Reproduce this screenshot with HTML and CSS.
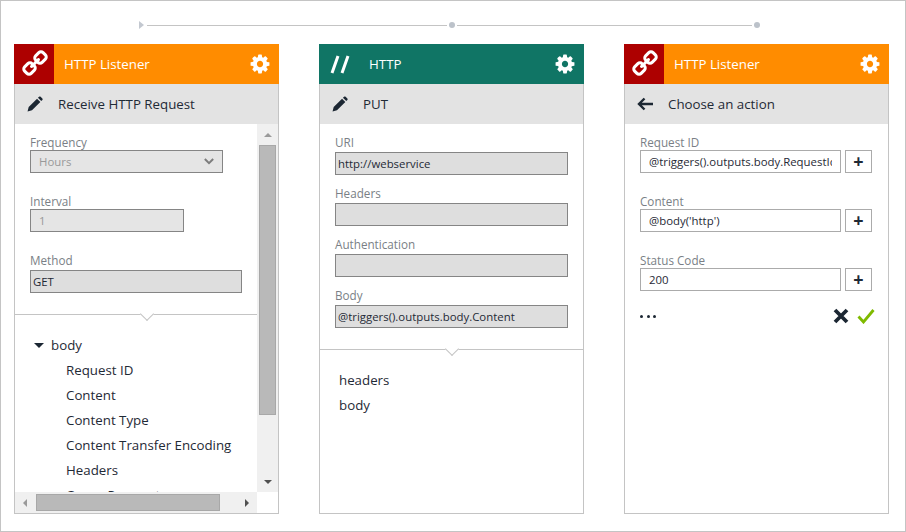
FILE: index.html
```html
<html>
  <head>
    <title>Logic app designer</title>
    <link rel="stylesheet" href="styles.css">
  </head>
  <body>
    <svg class="defs" width="0" height="0">
      <symbol id="iconLink" viewBox="0 0 1792 1792">
        <path fill="#fff" transform="matrix(-1 0 0 1 1792 0)" d="M1456 1216q0-40-28-68l-208-208q-28-28-68-28-42 0-72 32 3 3 19 18.500t21.500 21.500 15 19 13 25.500 3.500 27.500q0 40-28 68t-68 28q-15 0-27.500-3.500t-25.500-13-19-15-21.500-21.500-18.500-19q-33 31-33 73 0 40 28 68l206 207q27 27 68 27 40 0 68-26l147-146q28-28 28-67zm-703-705q0-40-28-68l-206-207q-28-28-68-28-39 0-68 27l-147 146q-28 28-28 67 0 40 28 68l208 208q27 27 68 27 42 0 72-31-3-3-19-18.500t-21.500-21.500-15-19-13-25.500-3.500-27.500q0-40 28-68t68-28q15 0 27.500 3.500t25.500 13 19 15 21.500 21.500 18.500 19q33-31 33-73zm895 705q0 120-85 203l-147 146q-83 83-203 83-121 0-204-85l-206-207q-83-83-83-203 0-123 88-209l-88-88q-86 88-208 88-120 0-204-84l-208-208q-84-84-84-204t85-203l147-146q83-83 203-83 121 0 204 85l206 207q83 83 83 203 0 123-88 209l88 88q86-88 208-88 120 0 204 84l208 208q84 84 84 204z"/>
      </symbol>
      <symbol id="iconGear" viewBox="0 0 1792 1792">
        <path fill="#fff" d="M1152 896q0-106-75-181t-181-75-181 75-75 181 75 181 181 75 181-75 75-181zm512-109v222q0 12-8 23t-20 13l-185 28q-19 54-39 91 35 50 107 138 10 12 10 25t-9 23q-27 37-99 108t-94 71q-12 0-26-9l-138-108q-44 23-91 38-16 136-29 186-7 28-36 28h-222q-14 0-24.500-8.500t-11.500-21.500l-28-184q-49-16-90-37l-141 107q-10 9-25 9-14 0-25-11-126-114-165-168-7-10-7-23 0-12 8-23 15-21 51-66.500t54-70.500q-27-50-41-99l-183-27q-13-2-21-12.500t-8-23.500v-222q0-12 8-23t19-13l186-28q14-46 39-92-40-57-107-138-10-12-10-24 0-10 9-23 26-36 98.500-107.500t94.500-71.500q13 0 26 10l138 107q44-23 91-38 16-136 29-186 7-28 36-28h222q14 0 24.500 8.500t11.500 21.500l28 184q49 16 90 37l142-107q9-9 24-9 13 0 25 10 129 119 165 170 7 8 7 22 0 12-8 23-15 21-51 66.500t-54 70.500q26 50 41 98l183 28q13 2 21 12.500t8 23.500z"/>
      </symbol>
      <symbol id="iconPencil" viewBox="0 0 18 18">
        <path fill="#1c2733" d="M0.6 17.400l1.300-5 9.400-9.400 3.700 3.700-9.400 9.400zM12.300 2l1.300-1.200c.5-.5 1.200-.5 1.700 0l2 2c.5.5.5 1.200 0 1.700l-1.300 1.200z"/>
      </symbol>
    </svg>

    <div class="frame">
      <div class="timeline">
        <span class="tlStart"></span>
        <span class="tlLine"></span>
        <span class="tlDot"></span>
        <span class="tlLine tlLineB"></span>
        <span class="tlDot"></span>
      </div>

      <div class="cards">
        <!-- primera tarjeta -->
        <div class="card">
          <div class="cardHead orange">
            <div class="headIcon red"><svg width="28" height="28"><use href="#iconLink"/></svg></div>
            <div class="headTitle">HTTP Listener</div>
            <svg class="gear" width="22" height="22"><use href="#iconGear"/></svg>
          </div>
          <div class="cardBody">
            <div class="subHead">
              <svg class="subIcon" width="16" height="16"><use href="#iconPencil"/></svg>
              <span>Receive HTTP Request</span>
            </div>
            <div class="scrollArea">
              <div class="scrollMain">
                <div class="pane">
                  <div class="form">
                    <div class="field">
                      <div class="lbl">Frequency</div>
                      <div class="box off selectBox">
                        <span>Hours</span>
                        <svg width="10" height="7" viewBox="0 0 12 8"><path d="M1 1l5 5 5-5" fill="none" stroke="#7d7d7d" stroke-width="2.400"/></svg>
                      </div>
                    </div>
                    <div class="field">
                      <div class="lbl">Interval</div>
                      <div class="box off intervalBox">1</div>
                    </div>
                    <div class="field">
                      <div class="lbl lblTall">Method</div>
                      <div class="box grey methodBox">GET</div>
                    </div>
                  </div>
                  <div class="divider dividerA"></div>
                  <div class="tree">
                    <div class="treeRoot"><span class="treeArrow"></span>body</div>
                    <div class="treeItem">Request ID</div>
                    <div class="treeItem">Content</div>
                    <div class="treeItem">Content Type</div>
                    <div class="treeItem">Content Transfer Encoding</div>
                    <div class="treeItem">Headers</div>
                    <div class="treeItem">Query Parameters</div>
                  </div>
                </div>
                <div class="vScroll">
                  <span class="arrow arrowUp"></span>
                  <span class="vThumb"></span>
                  <span class="arrow arrowDown"></span>
                </div>
              </div>
              <div class="hRow">
                <div class="hScroll">
                  <span class="arrow arrowLeft"></span>
                  <span class="hThumb"></span>
                  <span class="arrow arrowRight"></span>
                </div>
              </div>
            </div>
          </div>
        </div>

        <!-- segunda tarjeta -->
        <div class="card">
          <div class="cardHead teal">
            <div class="headIcon">
              <svg width="24" height="24" viewBox="0 0 24 24"><path d="M11 4L5 21M21 4L15 21" fill="none" stroke="#fff" stroke-width="3"/></svg>
            </div>
            <div class="headTitle">HTTP</div>
            <svg class="gear" width="22" height="22"><use href="#iconGear"/></svg>
          </div>
          <div class="cardBody">
            <div class="subHead">
              <svg class="subIcon" width="16" height="16"><use href="#iconPencil"/></svg>
              <span>PUT</span>
            </div>
            <div class="form formTight">
              <div class="field">
                <div class="lbl lblTall">URI</div>
                <div class="box grey wideBox">http://webservice</div>
              </div>
              <div class="field">
                <div class="lbl lblTall">Headers</div>
                <div class="box grey wideBox"></div>
              </div>
              <div class="field">
                <div class="lbl lblTall">Authentication</div>
                <div class="box grey wideBox"></div>
              </div>
              <div class="field">
                <div class="lbl lblTall">Body</div>
                <div class="box grey wideBox">@triggers().outputs.body.Content</div>
              </div>
            </div>
            <div class="divider dividerB"></div>
            <div class="outputs">
              <div class="outItem">headers</div>
              <div class="outItem">body</div>
            </div>
          </div>
        </div>

        <!-- tercera tarjeta -->
        <div class="card">
          <div class="cardHead orange">
            <div class="headIcon red"><svg width="28" height="28"><use href="#iconLink"/></svg></div>
            <div class="headTitle">HTTP Listener</div>
            <svg class="gear" width="22" height="22"><use href="#iconGear"/></svg>
          </div>
          <div class="cardBody">
            <div class="subHead">
              <svg class="subIcon" width="16" height="16" viewBox="0 0 16 16"><path d="M16 8H2.500M7.500 2.500L2 8l5.500 5.500" fill="none" stroke="#1c2733" stroke-width="2.400"/></svg>
              <span>Choose an action</span>
            </div>
            <div class="form">
              <div class="field">
                <div class="lbl">Request ID</div>
                <div class="inputRow">
                  <div class="box plain"><div class="clip">@triggers().outputs.body.RequestId</div></div>
                  <div class="plus">+</div>
                </div>
              </div>
              <div class="field">
                <div class="lbl">Content</div>
                <div class="inputRow">
                  <div class="box plain"><div class="clip">@body('http')</div></div>
                  <div class="plus">+</div>
                </div>
              </div>
              <div class="field">
                <div class="lbl">Status Code</div>
                <div class="inputRow">
                  <div class="box plain"><div class="clip">200</div></div>
                  <div class="plus">+</div>
                </div>
              </div>
              <div class="actions">
                <div class="dots"><span></span><span></span><span></span></div>
                <svg width="16" height="16" viewBox="0 0 16 16"><path d="M2 2l12 12M14 2L2 14" fill="none" stroke="#1c2733" stroke-width="3.800"/></svg>
                <svg class="okIcon" width="18" height="16" viewBox="0 0 18 16"><path d="M1.500 8.500l5 5.500L16.500 2" fill="none" stroke="#7fba00" stroke-width="2.800"/></svg>
              </div>
            </div>
          </div>
        </div>
      </div>
    </div>
  </body>
</html>
```

FILE: styles.css
```css
body { margin: 0; background-color: #fff; font-family: "Open Sans", "Noto Sans", Arial, sans-serif; font-size: 13px; color: #1f2a36; }

.defs { position: absolute; }

.frame {
  width: 906px;
  height: 532px;
  box-sizing: border-box;
  border: 1px solid #c4c4c4;
  padding: 0 16px 0 13px;
}

.timeline {
  display: flex;
  align-items: center;
  height: 10px;
  margin: 19px 0 14px 125px;
}
.tlStart {
  width: 0;
  height: 0;
  border-left: 5px solid #c3c8d0;
  border-top: 4px solid transparent;
  border-bottom: 4px solid transparent;
  margin-right: 3px;
}
.tlLine { width: 300px; height: 1px; background-color: #c4c4c4; }
.tlLineB { width: 295px; }
.tlDot { width: 6px; height: 6px; margin: 0 2px; border-radius: 50%; background-color: #bcc2ca; }

.cards { display: flex; gap: 40px; }
.card { width: 265px; height: 470px; display: flex; flex-direction: column; }

.cardHead { display: flex; align-items: center; height: 40px; color: #fff; flex: none; }
.orange { background-color: #ff8c00; }
.teal { background-color: #107565; }
.red { background-color: #ad0000; }
.headIcon { width: 40px; height: 40px; display: flex; align-items: center; justify-content: center; }
.headTitle { flex-grow: 1; margin-left: 10px; font-size: 13.3px; }
.gear { margin-right: 8px; }

.cardBody {
  flex-grow: 1;
  min-height: 0;
  display: flex;
  flex-direction: column;
  border: 1px solid #c4c4c4;
  border-top: none;
}

.subHead { display: flex; align-items: center; height: 40px; flex: none; background-color: #e3e3e3; font-size: 13.3px; }
.subIcon { margin: 0 15px 0 12px; }

.form { padding: 11px 0 0 15px; }
.field { margin-bottom: 21px; }
.formTight .field { margin-bottom: 11px; }
.formTight { padding-bottom: 10px; }
.lbl { height: 15px; line-height: 15px; font-size: 11.7px; color: #7a7f86; }
.lblTall { height: 17px; }

.box {
  height: 23px;
  line-height: 21px;
  box-sizing: border-box;
  border: 1px solid #858585;
  padding: 0 2px;
  font-size: 11.4px;
  white-space: nowrap;
  overflow: hidden;
}
.off { background-color: #e5e5e5; color: #999; padding: 0 8px; }
.grey { background-color: #dedede; }
.plain { width: 201px; border-color: #ababab; padding: 0 8px; }
.clip { overflow: hidden; }
.selectBox { width: 193px; display: flex; justify-content: space-between; align-items: center; }
.intervalBox { width: 154px; }
.methodBox { width: 212px; }
.wideBox { width: 233px; }

.inputRow { display: flex; gap: 4px; }
.plus {
  width: 27px;
  height: 23px;
  line-height: 21px;
  box-sizing: border-box;
  border: 1px solid #ababab;
  text-align: center;
  font-size: 18px;
  font-weight: 700;
}

.actions { display: flex; align-items: center; margin-top: -4px; padding-right: 13px; }
.dots { display: flex; gap: 3.500px; flex-grow: 1; }
.dots span { width: 3px; height: 3px; border-radius: 50%; background-color: #1c2733; }
.okIcon { margin-left: 8px; }

.divider { position: relative; border-bottom: 1px solid #c4c4c4; flex: none; }
.divider::after {
  content: "";
  position: absolute;
  left: 127px;
  top: -5px;
  width: 9px;
  height: 9px;
  background-color: #fff;
  border-right: 1px solid #c4c4c4;
  border-bottom: 1px solid #c4c4c4;
  transform: rotate(45deg);
}

.outputs { padding: 18px 0 0 19px; }
.outItem { height: 25px; line-height: 25px; font-size: 13.3px; }

.scrollArea { flex-grow: 1; min-height: 0; display: flex; flex-direction: column; }
.scrollMain { flex-grow: 1; min-height: 0; display: flex; }
.pane { flex-grow: 1; min-width: 0; overflow: hidden; }

.tree { padding-top: 18px; font-size: 13.3px; }
.treeRoot, .treeItem { height: 25px; line-height: 25px; white-space: nowrap; }
.treeRoot { display: flex; align-items: center; padding-left: 19px; }
.treeItem { padding-left: 51px; }
.treeArrow {
  width: 0;
  height: 0;
  border-top: 5px solid #1c2733;
  border-left: 5px solid transparent;
  border-right: 5px solid transparent;
  margin-right: 7px;
}

.vScroll { width: 21px; flex: none; background-color: #f0f0f0; display: flex; flex-direction: column; align-items: center; justify-content: space-between; padding: 9px 0 8px; box-sizing: border-box; }
.vThumb { width: 17px; height: 270px; box-sizing: border-box; background-color: #b9b9b9; border: 1px solid #a8a8a8; margin-top: 8px; margin-bottom: auto; }
.hRow { height: 21px; flex: none; display: flex; }
.hScroll { width: 242px; display: flex; align-items: center; background-color: #f0f0f0; padding: 0 8px; box-sizing: border-box; }
.hThumb { width: 184px; height: 17px; box-sizing: border-box; background-color: #b9b9b9; border: 1px solid #a8a8a8; margin-left: 9px; margin-right: auto; }

.arrow { width: 0; height: 0; flex: none; }
.arrowUp { border-bottom: 4px solid #9a9a9a; border-left: 4px solid transparent; border-right: 4px solid transparent; }
.arrowDown { border-top: 4px solid #505050; border-left: 4px solid transparent; border-right: 4px solid transparent; }
.arrowLeft { border-right: 4px solid #9a9a9a; border-top: 4px solid transparent; border-bottom: 4px solid transparent; }
.arrowRight { border-left: 4px solid #505050; border-top: 4px solid transparent; border-bottom: 4px solid transparent; }
```
